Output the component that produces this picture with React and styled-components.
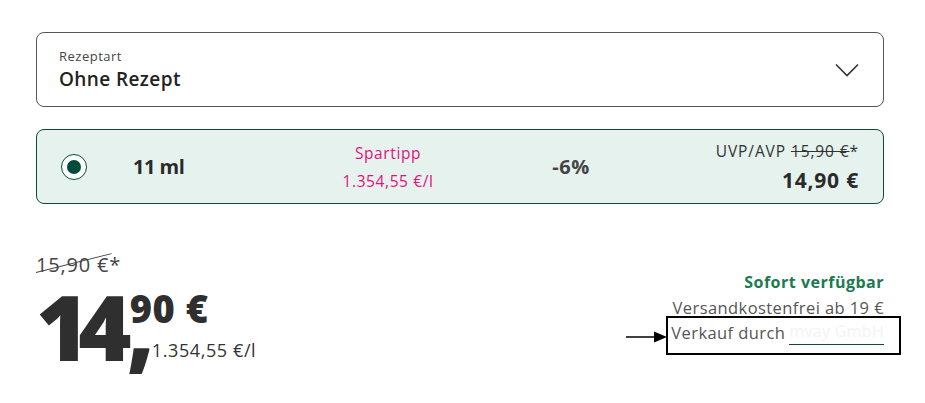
import React from "react";
import styled, { createGlobalStyle } from "styled-components";

const Global = createGlobalStyle`
  html, body { margin: 0; padding: 0; background: #fff; }
  body { font-family: "Open Sans", "Noto Sans", sans-serif; color: #333; }
`;

const Page = styled.div`
  width: 848px;
  padding: 32px 0 0 36px;
  display: flex;
  flex-direction: column;
`;

const Select = styled.div`
  height: 73px;
  border: 1px solid #555;
  border-radius: 8px;
  display: flex;
  align-items: center;
  justify-content: space-between;
  padding: 0 24px 0 22px;
`;

const SelectText = styled.div`
  display: flex;
  flex-direction: column;
  gap: 2px;
  margin-top: -2px;
`;

const SelectLabel = styled.span`
  font-size: 13px;
  color: #444;
  line-height: 18px;
  letter-spacing: 0.5px;
`;

const SelectValue = styled.span`
  font-size: 19px;
  font-weight: 600;
  color: #222;
  line-height: 24px;
  letter-spacing: 0.4px;
`;

const Chevron = () => (
  <svg width="24" height="14" viewBox="0 0 24 14" fill="none">
    <path d="M1 1.5 L12 12.5 L23 1.5" stroke="#333" strokeWidth="1.6" />
  </svg>
);

const VariantCard = styled.div`
  margin-top: 22px;
  height: 73px;
  border: 1px solid #0c4a3a;
  border-radius: 8px;
  background: #e6f2ee;
  display: grid;
  grid-template-columns: 72px 170px 170px 190px 1fr;
  align-items: center;
  padding: 0 24px 0 24px;
`;

const Radio = styled.span`
  width: 24px;
  height: 24px;
  border-radius: 50%;
  border: 1.5px solid #0b4a3a;
  background: #fff;
  display: flex;
  align-items: center;
  justify-content: center;
  &::after {
    content: "";
    width: 14px;
    height: 14px;
    border-radius: 50%;
    background: #004c3b;
  }
`;

const Size = styled.span`
  font-size: 20px;
  font-weight: 700;
  color: #2a2a2a;
  letter-spacing: -0.5px;
`;

const Tip = styled.div`
  display: flex;
  flex-direction: column;
  align-items: center;
  color: #e0127d;
  font-size: 15.5px;
  gap: 6px;
  line-height: 22px;
  letter-spacing: 0.6px;
`;

const Discount = styled.span`
  font-size: 20px;
  font-weight: 700;
  color: #444;
  justify-self: center;
  letter-spacing: 0.6px;
  margin-left: 6px;
`;

const PriceCol = styled.div`
  display: flex;
  flex-direction: column;
  align-items: flex-end;
  gap: 6px;
`;

const Uvp = styled.span`
  font-size: 15.5px;
  color: #333;
  line-height: 20px;
  letter-spacing: 0.9px;
`;

const Strike = styled.s`
  text-decoration-thickness: 1px;
`;

const CardPrice = styled.span`
  font-size: 21px;
  font-weight: 700;
  color: #2a2a2a;
  line-height: 26px;
  letter-spacing: 0.8px;
`;

const Bottom = styled.div`
  margin-top: 48px;
  display: flex;
  justify-content: space-between;
  align-items: flex-start;
`;

const LeftPrice = styled.div`
  display: flex;
  flex-direction: column;
`;

const OldPrice = styled.span`
  position: relative;
  align-self: flex-start;
  font-size: 20px;
  color: #444;
  line-height: 26px;
  letter-spacing: 0.8px;
  &::after {
    content: "";
    position: absolute;
    left: 0;
    top: 20px;
    width: 78px;
    height: 1.3px;
    background: #444;
    transform: rotate(-14deg);
    transform-origin: left center;
  }
`;

const PriceRow = styled.div`
  display: flex;
  align-items: flex-start;
  margin-top: 0px;
`;

const BigPrice = styled.span`
  font-size: 91px;
  font-weight: 800;
  color: #2f2f2f;
  line-height: 96px;
  letter-spacing: -11px;
`;

const Comma = styled.span`
  font-size: 91px;
  font-weight: 800;
  color: #2f2f2f;
  line-height: 96px;
  margin-left: 6px;
`;

const PriceSide = styled.div`
  display: flex;
  flex-direction: column;
  margin-left: -25px;
  padding-top: 10px;
`;

const Cents = styled.span`
  font-size: 38px;
  font-weight: 800;
  color: #2f2f2f;
  line-height: 40px;
  letter-spacing: 0.5px;
`;

const Unit = styled.span`
  margin-top: 10px;
  margin-left: 22px;
  font-size: 18px;
  color: #333;
  line-height: 24px;
  letter-spacing: 0.6px;
`;

const Info = styled.div`
  display: flex;
  flex-direction: column;
  align-items: flex-end;
  padding-top: 18px;
  font-size: 16.5px;
  color: #555;
  line-height: 25px;
  letter-spacing: 0.42px;
`;

const Available = styled.span`
  color: #1b7a4f;
  font-weight: 700;
  font-size: 16px;
  letter-spacing: 0.5px;
`;

const Seller = styled.span`
  position: relative;
  display: flex;
  gap: 4px;
`;

const SellerName = styled.span`
  color: #f3f3f3;
  border-bottom: 1px solid #0c4a3a;
  line-height: 22px;
  font-size: 16px;
  letter-spacing: 0.3px;
`;

const Highlight = styled.span`
  position: absolute;
  left: -5px;
  right: -17px;
  top: -4px;
  bottom: -10px;
  border: 2px solid #000;
  pointer-events: none;
`;

const Arrow = styled.svg`
  position: absolute;
  left: -45px;
  top: 11px;
`;

export default function App() {
  return (
    <>
      <Global />
      <Page>
        <Select>
          <SelectText>
            <SelectLabel>Rezeptart</SelectLabel>
            <SelectValue>Ohne Rezept</SelectValue>
          </SelectText>
          <Chevron />
        </Select>

        <VariantCard>
          <Radio />
          <Size>11 ml</Size>
          <Tip>
            <span>Spartipp</span>
            <span>1.354,55 €/l</span>
          </Tip>
          <Discount>-6%</Discount>
          <PriceCol>
            <Uvp>
              UVP/AVP <Strike>15,90 €</Strike>*
            </Uvp>
            <CardPrice>14,90 €</CardPrice>
          </PriceCol>
        </VariantCard>

        <Bottom>
          <LeftPrice>
            <OldPrice>15,90 €*</OldPrice>
            <PriceRow>
              <BigPrice>14</BigPrice>
              <Comma>,</Comma>
              <PriceSide>
                <Cents>90 €</Cents>
                <Unit>1.354,55 €/l</Unit>
              </PriceSide>
            </PriceRow>
          </LeftPrice>
          <Info>
            <Available>Sofort verfügbar</Available>
            <span>Versandkostenfrei ab 19 €</span>
            <Seller>
              Verkauf durch <SellerName>mvay GmbH</SellerName>
              <Highlight />
              <Arrow width="42" height="12" viewBox="0 0 42 12">
                <path d="M0 6 H30" stroke="#000" strokeWidth="1.5" />
                <path d="M28 0.5 L41 6 L28 11.5 Z" fill="#000" />
              </Arrow>
            </Seller>
          </Info>
        </Bottom>
      </Page>
    </>
  );
}
